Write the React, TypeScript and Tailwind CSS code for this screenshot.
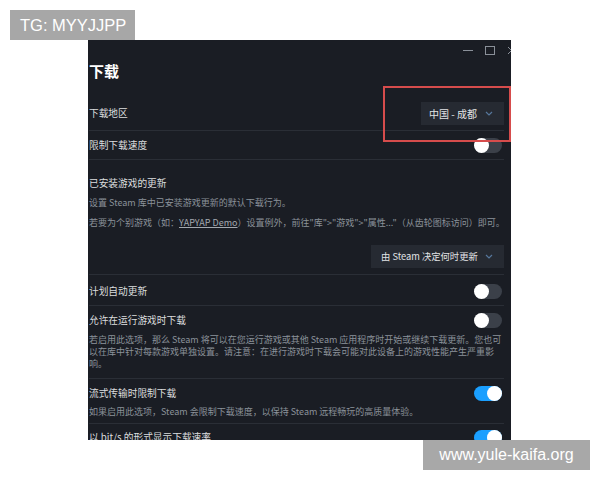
import React from "react";

const Toggle = ({ on }: { on?: boolean }) => (
  <div
    className={
      on
        ? "mr-[2px] flex h-[15px] w-[28px] shrink-0 justify-end rounded-full bg-[#1a9fff]"
        : "mr-[2px] flex h-[15px] w-[28px] shrink-0 justify-start rounded-full bg-[#3b4049]"
    }
  >
    <div className="h-[15px] w-[15px] rounded-full bg-white" />
  </div>
);

const Chevron = () => (
  <svg width="8" height="5" viewBox="0 0 8 5" className="shrink-0">
    <path d="M1 1 L4 4 L7 1" fill="none" stroke="#56779c" strokeWidth="1.2" />
  </svg>
);

export default function App() {
  return (
    <div className="relative h-[480px] w-[600px] overflow-hidden bg-white">
      <div className="absolute left-[10px] top-[10px] flex h-[30px] w-[125px] items-center bg-[#a7a7a7] pl-[10px] text-[16.5px] text-white [font-family:'Liberation_Sans',Arial,sans-serif]">
        TG: MYYJJPP
      </div>

      <div className="ml-[88px] mt-[40px] h-[400px] w-[423px] overflow-hidden bg-[#1a1d24] [font-family:'Noto_Sans_CJK_SC','Noto_Sans',sans-serif]">
        <div className="relative">
          {/* window controls */}
          <div className="-mr-[5px] flex h-[20px] items-center justify-end gap-[12px]">
            <div className="h-px w-[10px] bg-[#8a9099]" />
            <div className="h-[9px] w-[10px] border border-[#8a9099]" />
            <svg width="9" height="9" viewBox="0 0 9 9" className="shrink-0">
              <path d="M1 1 L8 8 M8 1 L1 8" stroke="#8a9099" strokeWidth="1" />
            </svg>
          </div>

          <div className="pl-[1px] pr-[7px]">
            <div className="h-[22px] text-[15px] font-bold leading-[22px] text-white">下载</div>

            <div className="mt-[14px] flex h-[35px] items-center justify-between border-b border-[#2a2e36] text-[9.7px] text-[#dcdedf]">
              <span>下载地区</span>
              <div className="flex h-[23px] w-[83px] items-center justify-between whitespace-nowrap bg-[#262a32] pl-[8px] pr-[11px] text-[10px] text-[#e2e4e6]">
                <span>中国 - 成都</span>
                <Chevron />
              </div>
            </div>

            <div className="flex h-[29px] items-center justify-between border-b border-[#2a2e36] text-[9.7px] text-[#dcdedf]">
              <span>限制下载速度</span>
              <Toggle />
            </div>

            <div className="flex flex-col border-b border-[#2a2e36] pb-[6px] pt-[13px]">
              <div className="h-[20px] text-[9.7px] leading-[20px] text-[#dcdedf]">已安装游戏的更新</div>
              <div className="h-[20px] whitespace-nowrap text-[9px] leading-[20px] text-[#8b929a]">
                设置 Steam 库中已安装游戏更新的默认下载行为。
              </div>
              <div className="h-[20px] whitespace-nowrap text-[9px] leading-[20px] text-[#8b929a]">
                若要为个别游戏（如：<span className="text-[#a3a9b0] underline">YAPYAP Demo</span>）设置例外，前往"库"&gt;"游戏"&gt;"属性..."（从齿轮图标访问）即可。
              </div>
              <div className="mt-[12px] flex h-[23px] w-[133px] items-center justify-between self-end whitespace-nowrap bg-[#262a32] pl-[10px] pr-[11px] text-[9.3px] text-[#e2e4e6]">
                <span>由 Steam 决定何时更新</span>
                <Chevron />
              </div>
            </div>

            <div className="flex h-[31px] items-center justify-between border-b border-[#2a2e36] pt-[2px] text-[9.7px] text-[#dcdedf]">
              <span>计划自动更新</span>
              <Toggle />
            </div>

            <div className="border-b border-[#2a2e36] pb-[8px] pt-[4px]">
              <div className="flex h-[20px] items-center justify-between text-[9.7px] text-[#dcdedf]">
                <span>允许在运行游戏时下载</span>
                <Toggle />
              </div>
              <div className="mt-[4px] whitespace-nowrap text-[9px] leading-[12px] text-[#8b929a]">
                <div>若启用此选项，那么 Steam 将可以在您运行游戏或其他 Steam 应用程序时开始或继续下载更新。您也可</div>
                <div>以在库中针对每款游戏单独设置。请注意：在进行游戏时下载会可能对此设备上的游戏性能产生严重影</div>
                <div>响。</div>
              </div>
            </div>

            <div className="border-b border-[#2a2e36] pb-[2px] pt-[4px]">
              <div className="flex h-[20px] items-center justify-between text-[9.7px] text-[#dcdedf]">
                <span>流式传输时限制下载</span>
                <Toggle on />
              </div>
              <div className="h-[18px] whitespace-nowrap text-[9px] leading-[18px] text-[#8b929a]">
                如果启用此选项，Steam 会限制下载速度，以保持 Steam 远程畅玩的高质量体验。
              </div>
            </div>

            <div className="mt-[3px] flex h-[20px] items-center justify-between text-[9.7px] text-[#dcdedf]">
              <span>以 bit/s 的形式显示下载速率</span>
              <Toggle on />
            </div>
          </div>

          <div className="absolute left-[295px] top-[46px] h-[56px] w-[128px] border-2 border-[#d64c4c]" />
        </div>
      </div>

      <div className="absolute left-[423px] top-[440px] flex h-[30px] w-[167px] items-center justify-center bg-[#a8a8a8] text-[16px] text-white [font-family:'Liberation_Sans',Arial,sans-serif]">
        www.yule-kaifa.org
      </div>
    </div>
  );
}
